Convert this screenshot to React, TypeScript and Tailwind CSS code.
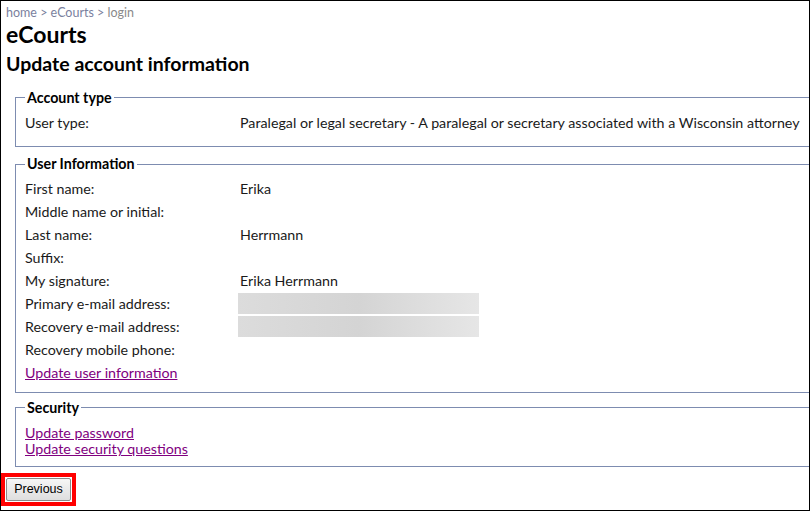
import React from "react";

const font = { fontFamily: "Lato, 'Noto Sans', sans-serif" };

function Row({ label, value, gray }: { label: string; value?: string; gray?: boolean }) {
  return (
    <div className="flex h-[23px] items-center">
      <div className="w-[215px] shrink-0">{label}</div>
      {gray ? (
        <div className="h-[21px] w-[241px] -ml-[2px] bg-gradient-to-r from-[#dcdcdc] via-[#d4d4d4] to-[#e6e6e6]" />
      ) : (
        <div className="whitespace-nowrap">{value}</div>
      )}
    </div>
  );
}

export default function App() {
  return (
    <div className="w-[811px] h-[512px] bg-white overflow-hidden">
      <div
        className="w-[810px] h-[511px] border border-black overflow-hidden text-[14.25px] text-[#1a1a1a] relative"
        style={font}
      >
        <div className="pl-[5px] pt-[5px] text-[12.5px] leading-[14px] text-[#7a7f9e]">
          home &gt; eCourts &gt; <span className="text-[#8a8a8a]">login</span>
        </div>
        <div className="pl-[5px] pt-[2px] text-[23px] leading-[24px] font-bold text-black">eCourts</div>
        <div className="pl-[5px] pt-[6px] text-[19.5px] leading-[24px] font-bold text-black">
          Update account information
        </div>

        <fieldset className="ml-[14px] mr-[-60px] mt-[11px] border border-[#7d8cb0] pl-[9px] pt-[3px] pb-[12px]">
          <legend className="ml-0 px-[2px] font-bold text-black">Account type</legend>
          <Row label="User type:" value="Paralegal or legal secretary - A paralegal or secretary associated with a Wisconsin attorney" />
        </fieldset>

        <fieldset className="ml-[14px] mr-[-60px] mt-[6px] border border-[#7d8cb0] pl-[9px] pt-[2px] pb-[8px]">
          <legend className="ml-0 px-[2px] font-bold text-black">User Information</legend>
          <Row label="First name:" value="Erika" />
          <Row label="Middle name or initial:" />
          <Row label="Last name:" value="Herrmann" />
          <Row label="Suffix:" />
          <Row label="My signature:" value="Erika Herrmann" />
          <Row label="Primary e-mail address:" gray />
          <Row label="Recovery e-mail address:" gray />
          <Row label="Recovery mobile phone:" />
          <div className="h-[23px] flex items-center">
            <a href="#" className="text-[#800080] underline">Update user information</a>
          </div>
        </fieldset>

        <fieldset className="ml-[14px] mr-[-60px] mt-[4px] border border-[#7d8cb0] pl-[9px] pb-[9px]">
          <legend className="ml-0 px-[2px] font-bold text-black">Security</legend>
          <div className="leading-[16px] pt-[7px]">
            <a href="#" className="block w-fit text-[#800080] underline">Update password</a>
            <a href="#" className="block w-fit text-[#800080] underline">Update security questions</a>
          </div>
        </fieldset>

        <div className="mt-[6px] w-[75px] h-[33px] border-[4px] border-[#ff0000] flex items-center justify-center">
          <button
            className="h-[23px] px-[7px] rounded-[2px] border border-[#8a8a8a] bg-gradient-to-b from-[#f6f6f6] to-[#dedede] text-[12.5px] text-black"
            style={{ fontFamily: "'Liberation Sans', Arial, sans-serif" }}
          >
            Previous
          </button>
        </div>
      </div>
    </div>
  );
}
